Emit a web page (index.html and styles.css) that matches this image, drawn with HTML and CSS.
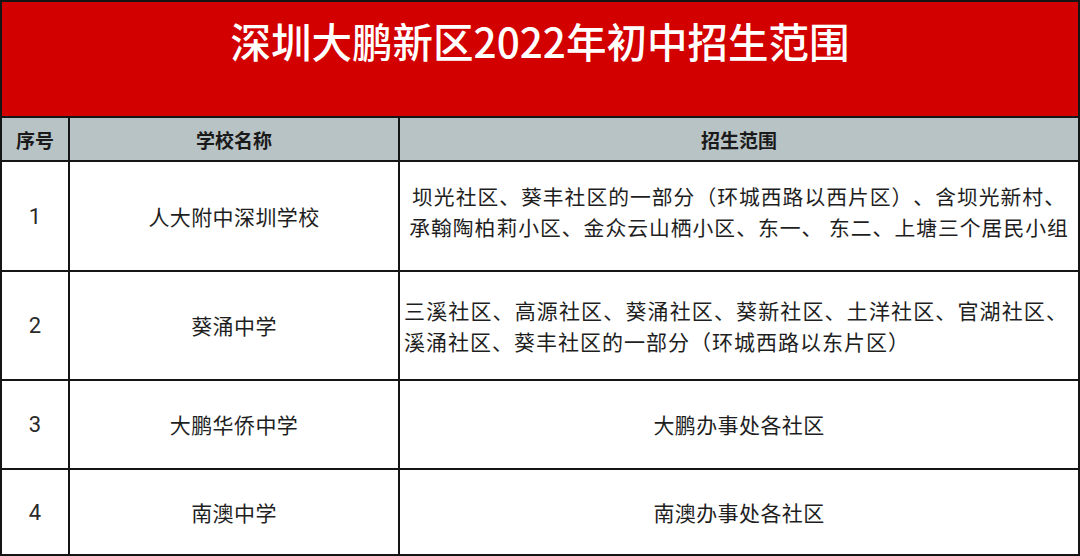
FILE: index.html
```html
<!DOCTYPE html>
<html lang="zh-CN">
<head>
<meta charset="utf-8">
<title>深圳大鹏新区2022年初中招生范围</title>
<link rel="stylesheet" href="styles.css">
</head>
<body>
<div class="sheet">
  <div class="title">深圳大鹏新区2022年初中招生范围</div>
  <div class="th">序号</div>
  <div class="th">学校名称</div>
  <div class="th">招生范围</div>

  <div class="td num">1</div>
  <div class="td">人大附中深圳学校</div>
  <div class="td range center">坝光社区、葵丰社区的一部分（环城西路以西片区）、含坝光新村、<br>承翰陶柏莉小区、金众云山栖小区、东一、 东二、上塘三个居民小组</div>

  <div class="td num">2</div>
  <div class="td">葵涌中学</div>
  <div class="td range left">三溪社区、高源社区、葵涌社区、葵新社区、土洋社区、官湖社区、溪涌社区、葵丰社区的一部分（环城西路以东片区）</div>

  <div class="td num">3</div>
  <div class="td">大鹏华侨中学</div>
  <div class="td">大鹏办事处各社区</div>

  <div class="td num">4</div>
  <div class="td">南澳中学</div>
  <div class="td">南澳办事处各社区</div>
</div>
</body>
</html>
```

FILE: styles.css
```css
html, body {
  margin: 0;
  padding: 0;
  background: #ffffff;
}

.sheet {
  width: 1080px;
  height: 556px;
  box-sizing: border-box;
  padding: 2px;
  background: #151515;
  display: grid;
  grid-template-columns: 66px 328px 1fr;
  grid-template-rows: 114px 42px 108px 107px 87px 84px;
  gap: 2px;
  font-family: "Noto Sans CJK SC", "Noto Sans", sans-serif;
  color: #1e1e1e;
  text-spacing-trim: space-all;
}

.title {
  grid-column: 1 / -1;
  background: #d30000;
  color: #ffffff;
  font-size: 40.5px;
  font-weight: 500;
  line-height: 40px;
  text-align: center;
  padding-top: 19px;
  box-sizing: border-box;
}

.th {
  background: #b8c3c5;
  display: flex;
  align-items: center;
  justify-content: center;
  font-size: 19px;
  font-weight: 700;
  color: #1a1a1a;
}

.td {
  background: #ffffff;
  display: flex;
  align-items: center;
  justify-content: center;
  font-size: 21px;
  line-height: 31px;
  letter-spacing: 0.4px;
  color: #1e1e1e;
}

.num {
  font-family: Roboto, "Liberation Sans", sans-serif;
  font-size: 22px;
  letter-spacing: 0;
  color: #2a2a2a;
}

.range {
  padding: 0 6px 0 6px;
}

.range.center {
  text-align: center;
  padding-bottom: 8px;
  font-size: 20.8px;
  letter-spacing: 1px;
}

.range.left {
  text-align: justify;
  justify-content: flex-start;
  padding: 0 10px 0 4px;
  letter-spacing: 1px;
}
```
